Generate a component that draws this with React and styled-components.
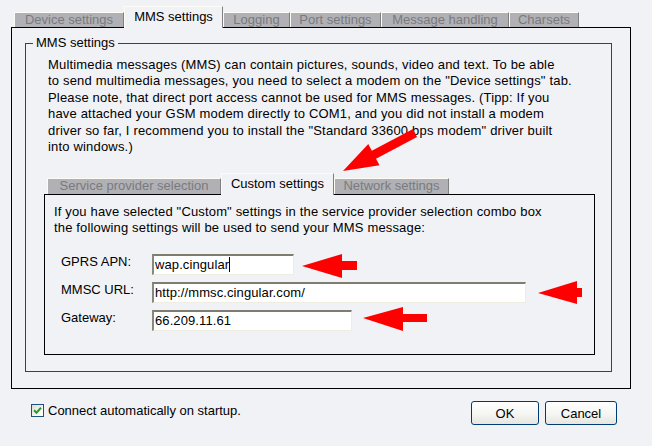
import React from "react";
import styled, { createGlobalStyle, css } from "styled-components";

const Global = createGlobalStyle`
  html, body { margin: 0; padding: 0; background: #f1f2f6; }
  body { font-family: "Liberation Sans", Arial, sans-serif; font-size: 13px; color: #000; }
  * { box-sizing: border-box; }
`;

const Page = styled.div`
  position: relative;
  width: 652px;
  height: 446px;
  padding: 6px 0 0 11px;
  overflow: hidden;
`;

const TabStrip = styled.div`
  display: flex;
  align-items: flex-end;
  padding-left: ${(p) => p.$indent}px;
  height: ${(p) => p.$height}px;
  position: relative;
  z-index: 1;
`;

const Tab = styled.div`
  width: ${(p) => p.$w}px;
  flex: none;
  text-align: center;
  white-space: nowrap;
  border-top: 1px solid #fdfcf4;
  border-left: 1px solid #fdfcf4;
  border-right: 1px solid #808080;
  ${(p) =>
    p.$active
      ? css`
          height: ${p.$big}px;
          margin-bottom: -1px;
          background: #f1f2f6;
          color: #000;
          line-height: ${p.$big - 4}px;
          padding-top: 1px;
        `
      : css`
          height: ${p.$small}px;
          background: #b1b1b5;
          color: #7a7a7e;
          line-height: ${p.$small - 2}px;
        `}
`;

const Panel = styled.div`
  width: ${(p) => p.$w}px;
  height: ${(p) => p.$h}px;
  border: 1px solid #000;
  padding: ${(p) => p.$pad};
`;

const Group = styled.div`
  margin-top: 15px;
  width: 587px;
  height: 329px;
  border: 1px solid #404040;
`;

const Legend = styled.div`
  width: fit-content;
  margin: -9px 0 0 7px;
  padding: 0 3px;
  line-height: 16px;
  background: #f1f2f6;
`;

const Intro = styled.p`
  margin: 6px 0 0 22px;
  line-height: 16.4px;
  letter-spacing: 0.18px;
  white-space: nowrap;
`;

const InnerBlock = styled.div`
  margin: 18px 0 0 18px;
`;

const Note = styled.p`
  margin: 0;
  line-height: 16px;
  letter-spacing: 0.16px;
  white-space: nowrap;
`;

const Form = styled.div`
  margin: 18px 0 0 7px;
  display: flex;
  flex-direction: column;
  gap: 7px;
`;

const Row = styled.div`
  display: flex;
  align-items: flex-start;
`;

const Label = styled.div`
  width: 91px;
  line-height: 16px;
`;

const Field = styled.div`
  width: ${(p) => p.$w}px;
  height: 21px;
  background: #fff;
  border-style: solid;
  border-width: 2px 1px 1px 2px;
  border-color: #7f7c70 #efede1 #efede1 #8a877b;
  padding-left: 1px;
  line-height: 17px;
  letter-spacing: 0.1px;
  white-space: nowrap;
`;

const Caret = styled.span`
  display: inline-block;
  width: 1px;
  height: 15px;
  background: #000;
  vertical-align: -3px;
`;

const Bottom = styled.div`
  width: 620px;
  margin-top: 12px;
  display: flex;
  align-items: flex-start;
  padding: 0 14px 0 20px;
`;

const CheckLabel = styled.label`
  display: flex;
  align-items: center;
  gap: 4px;
  margin-top: 3px;
  line-height: 13px;
`;

const Box = styled.span`
  width: 13px;
  height: 13px;
  border: 1px solid #1c5180;
  background: linear-gradient(135deg, #dcdcd5 0%, #f6f6f2 60%, #ffffff 100%);
  display: flex;
  align-items: center;
  justify-content: center;
`;

const Buttons = styled.div`
  margin-left: auto;
  display: flex;
  gap: 6px;
`;

const Button = styled.button`
  width: ${(p) => p.$w}px;
  height: 24px;
  border: 1px solid #003c74;
  border-radius: 3px;
  background: linear-gradient(#ffffff 0%, #f4f4f0 60%, #e6e5de 100%);
  font: inherit;
  font-size: 13px;
  color: #000;
  padding: 0;
`;

const Overlay = styled.svg`
  position: absolute;
  left: 0;
  top: 0;
  pointer-events: none;
`;

const outerTabs = [
  ["Device settings", 110],
  ["MMS settings", 99, true],
  ["Logging", 67],
  ["Port settings", 91],
  ["Message handling", 128],
  ["Charsets", 70],
];

const innerTabs = [
  ["Service provider selection", 174],
  ["Custom settings", 113, true],
  ["Network settings", 115],
];

const intro = [
  "Multimedia messages (MMS) can contain pictures, sounds, video and text. To be able",
  'to send multimedia messages, you need to select a modem on the "Device settings" tab.',
  "Please note, that direct port access cannot be used for MMS messages. (Tipp: If you",
  "have attached your GSM modem directly to COM1, and you did not install a modem",
  'driver so far, I recommend you to install the "Standard 33600 bps modem" driver built',
  "into windows.)",
];

export default function App() {
  return (
    <>
      <Global />
      <Page>
        <TabStrip $indent={3} $height={21}>
          {outerTabs.map(([t, w, a]) => (
            <Tab key={t} $w={w} $active={a} $big={22} $small={15}>
              {t}
            </Tab>
          ))}
        </TabStrip>
        <Panel $w={620} $h={362} $pad="0 0 0 13px">
          <Group>
            <Legend>MMS settings</Legend>
            <Intro>
              {intro.map((l, i) => (
                <React.Fragment key={i}>
                  {l}
                  {i < intro.length - 1 && <br />}
                </React.Fragment>
              ))}
            </Intro>
            <InnerBlock>
              <TabStrip $indent={3} $height={21}>
                {innerTabs.map(([t, w, a]) => (
                  <Tab key={t} $w={w} $active={a} $big={22} $small={16}>
                    {t}
                  </Tab>
                ))}
              </TabStrip>
              <Panel $w={551} $h={161} $pad="9px 0 0 9px">
                <Note>
                  If you have selected "Custom" settings in the service provider selection combo box
                  <br />
                  the following settings will be used to send your MMS message:
                </Note>
                <Form>
                  <Row>
                    <Label>GPRS APN:</Label>
                    <Field $w={142}>
                      wap.cingular
                      <Caret />
                    </Field>
                  </Row>
                  <Row>
                    <Label>MMSC URL:</Label>
                    <Field $w={374}>http://mmsc.cingular.com/</Field>
                  </Row>
                  <Row>
                    <Label>Gateway:</Label>
                    <Field $w={200}>66.209.11.61</Field>
                  </Row>
                </Form>
              </Panel>
            </InnerBlock>
          </Group>
        </Panel>
        <Bottom>
          <CheckLabel>
            <Box>
              <svg width="9" height="9" viewBox="0 0 9 9">
                <path d="M1 4.2 L3.5 6.7 L8 1.8" fill="none" stroke="#21a121" strokeWidth="2" />
              </svg>
            </Box>
            Connect automatically on startup.
          </CheckLabel>
          <Buttons>
            <Button $w={68}>OK</Button>
            <Button $w={72}>Cancel</Button>
          </Buttons>
        </Bottom>
        <Overlay width="652" height="446" viewBox="0 0 652 446">
          <g fill="#ff0000">
            <polygon points="343,171 379.5,165.3 376,158.7 417,137 413,129 371.8,150.7 368.3,144.1" />
            <polygon points="302,266 342,254 342,261 357,261 357,270 342,270 342,278" />
            <polygon points="538,293 577,281 577,288 582,288 582,297 577,297 577,304" />
            <polygon points="363,318 403,307 403,314 427,314 427,322 403,322 403,331" />
          </g>
        </Overlay>
      </Page>
    </>
  );
}
